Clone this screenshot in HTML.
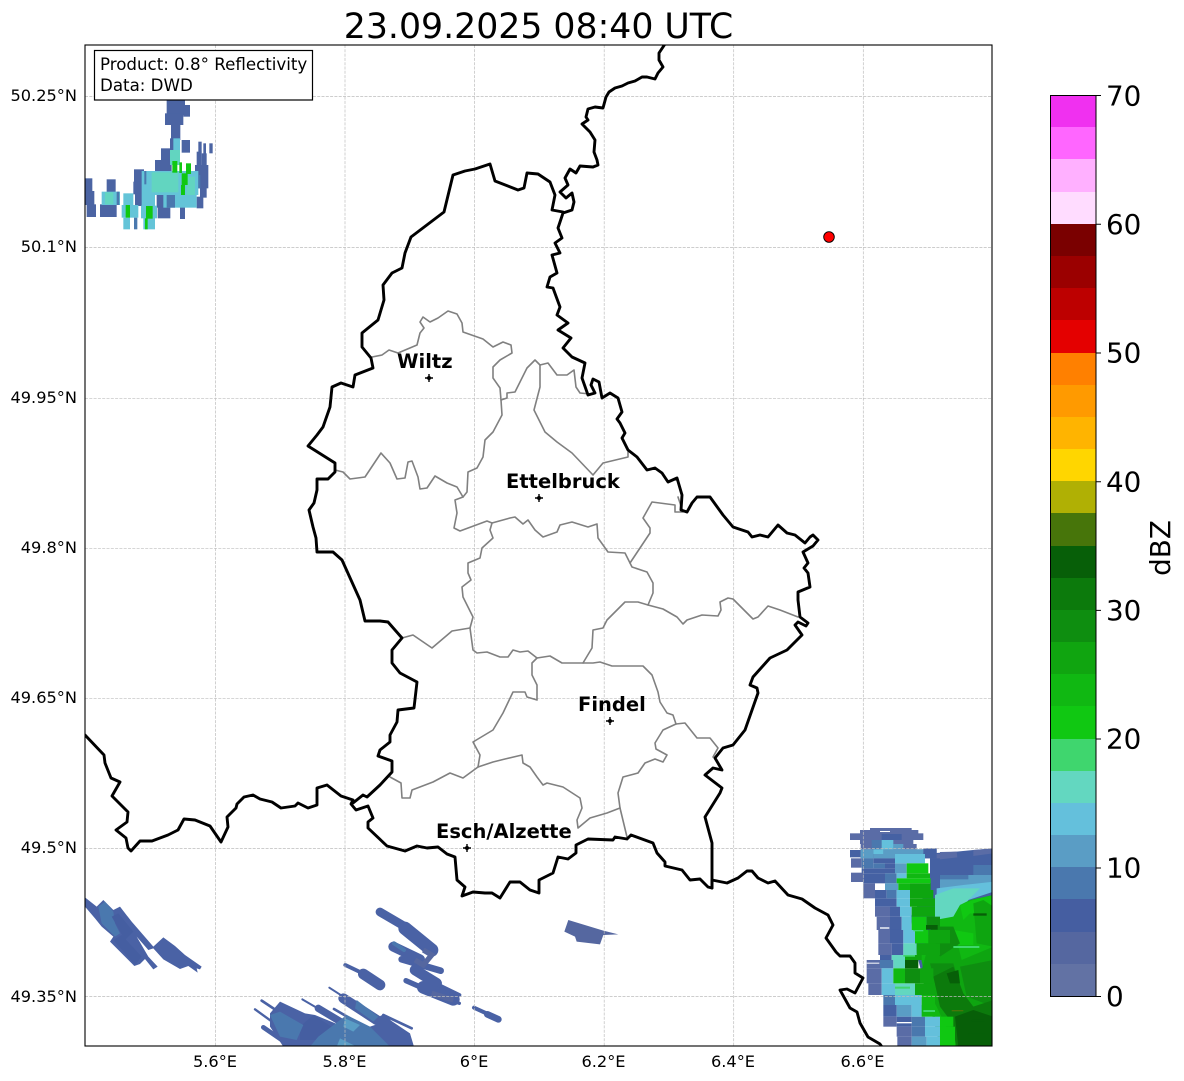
<!DOCTYPE html>
<html><head><meta charset="utf-8"><style>html,body{margin:0;padding:0;background:#fff}svg{display:block}text{font-family:"DejaVu Sans",sans-serif;fill:#000}</style></head><body>
<svg xmlns="http://www.w3.org/2000/svg" width="1184" height="1081" viewBox="0 0 1184 1081">
<defs><clipPath id="ax"><rect x="85" y="45" width="907" height="1001"/></clipPath></defs>
<rect width="1184" height="1081" fill="#fff"/>
<g clip-path="url(#ax)">
<!-- NW radar -->
<g transform="translate(85,45) scale(.33333)">
<g fill="#4b64a3"><rect x="245" y="160" width="55" height="50"/><rect x="240" y="205" width="55" height="35"/><rect x="295" y="180" width="20" height="35"/><rect x="258" y="240" width="28" height="45"/><rect x="255" y="280" width="30" height="35"/><rect x="290" y="285" width="25" height="38"/><rect x="228" y="310" width="30" height="40"/><rect x="210" y="345" width="50" height="38"/><rect x="147" y="373" width="30" height="40"/><rect x="145" y="410" width="50" height="38"/><rect x="150" y="445" width="60" height="38"/><rect x="335" y="320" width="15" height="42"/><rect x="350" y="325" width="15" height="38"/><rect x="330" y="360" width="40" height="70"/><rect x="345" y="420" width="20" height="38"/><rect x="335" y="455" width="20" height="35"/><rect x="215" y="450" width="30" height="38"/><rect x="0" y="400" width="22" height="40"/><rect x="0" y="438" width="28" height="42"/><rect x="5" y="478" width="28" height="38"/><rect x="65" y="403" width="27" height="40"/><rect x="45" y="478" width="50" height="38"/><rect x="218" y="485" width="38" height="35"/><rect x="285" y="487" width="15" height="35"/><rect x="340" y="290" width="10" height="32"/><rect x="355" y="295" width="8" height="32"/><rect x="373" y="295" width="10" height="30"/></g>
<g fill="#64c4d8"><rect x="265" y="280" width="20" height="35"/><rect x="110" y="480" width="50" height="38"/><rect x="235" y="450" width="100" height="38"/><rect x="115" y="518" width="20" height="35"/><rect x="175" y="518" width="35" height="35"/><rect x="147" y="518" width="10" height="35" fill="#4a78ae"/><rect x="168" y="482" width="48" height="38"/><rect x="170" y="378" width="170" height="72"/><rect x="50" y="440" width="55" height="40"/><rect x="115" y="445" width="30" height="35"/><rect x="170" y="450" width="40" height="35"/></g>
<g fill="#62d5c0"><rect x="200" y="382" width="80" height="60"/><rect x="255" y="315" width="30" height="45"/><rect x="305" y="395" width="25" height="55"/><rect x="60" y="442" width="25" height="36"/></g>
<g fill="#4a78ae"><rect x="178" y="378" width="6" height="40"/><rect x="245" y="450" width="25" height="38"/><rect x="340" y="390" width="6" height="40"/><rect x="95" y="440" width="8" height="40"/></g>
<g fill="#10c812"><rect x="262" y="348" width="15" height="35"/><rect x="283" y="352" width="8" height="32"/><rect x="303" y="355" width="15" height="32"/><rect x="290" y="385" width="18" height="35"/><rect x="288" y="420" width="12" height="30"/><rect x="122" y="480" width="13" height="38"/><rect x="183" y="483" width="20" height="38"/><rect x="180" y="520" width="8" height="33"/></g>
</g>
<!-- SE radar -->
<g transform="translate(840,820) scale(.33333)">
<path fill="#4561a3" d="M270 100 350 95 400 90 460 85V680H300L270 560 230 400 212 290 270 200Z"/>
<path fill="#5a6ca6" d="M300 96 350 95 352 112 300 118ZM400 90 460 85V100L400 108Z"/>
<rect x="300" y="165" width="100" height="20" fill="#4a78ae"/><rect x="400" y="135" width="60" height="55" fill="#4a78ae"/>
<rect x="300" y="178" width="90" height="34" fill="#5a9dc5"/><rect x="385" y="165" width="75" height="30" fill="#5a9dc5"/>
<path fill="#64c0dc" d="M290 205 370 195 460 185V215L385 240 290 250Z"/>
<path fill="#63d7c0" d="M285 225 340 205 420 205 385 240 350 290 300 325H285Z"/>
<path fill="#10b812" d="M285 300 340 290 360 255 390 240 460 225V680H300L240 400Z"/>
<path fill="#10c812" d="M360 255 400 240 460 225V285L390 280 370 300ZM300 610 340 620 345 680H300ZM340 330 400 340 400 375 345 375Z"/>
<path fill="#0ea510" d="M280 320 340 320 365 420 460 380V680H345L290 560 240 470ZM400 250 430 240 460 260V380L410 370Z"/>
<path fill="#0e8e10" d="M270 320 340 320 360 370 300 410ZM270 430 340 430 370 530 300 540ZM360 440 460 420 460 560 380 530Z"/>
<path fill="#0c7a0c" d="M280 470 340 440 370 520 400 560 460 540V680H350L330 600 300 560Z"/>
<path fill="#075f08" d="M345 590 400 570 460 590V680H355ZM320 460 355 450 360 490 330 490Z"/>
<g fill="#5a6ca6"><rect x="90" y="24" width="125" height="8"/><rect x="60" y="30" width="175" height="12"/><rect x="30" y="40" width="220" height="20"/><rect x="60" y="60" width="160" height="12"/><rect x="62" y="72" width="168" height="16"/><rect x="62" y="88" width="228" height="14"/><rect x="62" y="102" width="238" height="13"/><rect x="33" y="115" width="32" height="28"/><rect x="33" y="158" width="37" height="28"/><rect x="70" y="190" width="35" height="45"/><rect x="105" y="260" width="45" height="30"/><rect x="110" y="290" width="40" height="40"/><rect x="115" y="330" width="35" height="40"/><rect x="115" y="370" width="40" height="35"/><rect x="80" y="420" width="40" height="25"/><rect x="80" y="445" width="45" height="45"/><rect x="85" y="490" width="40" height="35"/><rect x="130" y="590" width="40" height="30"/><rect x="170" y="620" width="45" height="30"/><rect x="172" y="650" width="43" height="30"/></g>
<g fill="#4561a3"><rect x="30" y="90" width="32" height="22"/><rect x="125" y="42" width="60" height="18"/><rect x="250" y="85" width="40" height="30"/><rect x="100" y="115" width="65" height="15"/><rect x="135" y="130" width="30" height="15"/><rect x="65" y="145" width="100" height="15"/><rect x="70" y="160" width="65" height="30"/><rect x="105" y="210" width="35" height="25"/><rect x="105" y="235" width="65" height="25"/><rect x="150" y="260" width="30" height="30"/><rect x="150" y="290" width="35" height="40"/><rect x="150" y="330" width="40" height="40"/><rect x="155" y="370" width="35" height="35"/><rect x="120" y="405" width="35" height="15"/><rect x="130" y="555" width="40" height="35"/><rect x="170" y="590" width="45" height="30"/></g>
<g fill="#4a78ae"><rect x="95" y="60" width="30" height="28"/><rect x="65" y="115" width="35" height="30"/><rect x="100" y="130" width="35" height="15"/><rect x="135" y="160" width="35" height="30"/><rect x="140" y="210" width="30" height="25"/><rect x="120" y="420" width="40" height="25"/><rect x="130" y="525" width="35" height="30"/><rect x="215" y="590" width="40" height="30"/><rect x="215" y="620" width="40" height="30"/><rect x="170" y="555" width="45" height="35" fill="#5a9dc5"/></g>
<g fill="#5a9dc5"><rect x="62" y="88" width="38" height="27"/><rect x="100" y="102" width="65" height="13"/><rect x="130" y="88" width="120" height="14"/><rect x="160" y="72" width="30" height="16"/><rect x="135" y="190" width="40" height="20"/><rect x="165" y="130" width="35" height="30"/><rect x="215" y="650" width="45" height="30"/></g>
<g fill="#64c0dc"><rect x="125" y="60" width="35" height="28"/><rect x="100" y="88" width="30" height="14"/><rect x="165" y="102" width="90" height="28"/><rect x="170" y="160" width="30" height="15"/><rect x="170" y="210" width="40" height="25"/><rect x="170" y="235" width="40" height="25"/><rect x="180" y="260" width="35" height="30"/><rect x="185" y="290" width="30" height="40"/><rect x="190" y="330" width="35" height="40"/><rect x="125" y="445" width="35" height="45"/><rect x="125" y="490" width="40" height="35"/><rect x="165" y="525" width="80" height="30"/><rect x="215" y="555" width="35" height="35"/><rect x="255" y="590" width="45" height="30"/><rect x="255" y="620" width="45" height="30"/><rect x="260" y="650" width="40" height="30"/></g>
<g fill="#63d7c0"><rect x="190" y="370" width="40" height="35"/><rect x="155" y="405" width="40" height="15"/><rect x="160" y="420" width="35" height="25"/><rect x="165" y="490" width="60" height="35"/></g>
<g fill="#10c812"><rect x="200" y="130" width="65" height="30"/><rect x="170" y="175" width="102" height="15"/><rect x="215" y="290" width="45" height="40"/><rect x="225" y="330" width="40" height="40"/><rect x="300" y="590" width="40" height="30"/><rect x="300" y="620" width="45" height="60"/></g>
<g fill="#10b812"><rect x="200" y="160" width="70" height="15"/><rect x="175" y="190" width="35" height="20"/><rect x="160" y="445" width="35" height="45"/><rect x="245" y="525" width="40" height="65"/></g>
<g fill="#0ea510"><rect x="210" y="190" width="62" height="20"/><rect x="210" y="210" width="70" height="25"/><rect x="210" y="235" width="75" height="25"/><rect x="215" y="260" width="70" height="30"/><rect x="265" y="330" width="65" height="40"/><rect x="230" y="370" width="70" height="35"/><rect x="195" y="405" width="50" height="15"/><rect x="240" y="445" width="40" height="45"/><rect x="225" y="490" width="60" height="35"/></g>
<g fill="#0e8e10"><rect x="260" y="290" width="40" height="30"/><rect x="195" y="445" width="45" height="45"/></g>
<g fill="#075f08"><rect x="195" y="420" width="40" height="25" /><rect x="258" y="315" width="35" height="14"/><rect x="395" y="600" width="40" height="5"/><rect x="385" y="640" width="50" height="5"/><rect x="400" y="280" width="40" height="7"/></g>
<g fill="#3fd66e"><rect x="340" y="378" width="78" height="6"/><rect x="220" y="330" width="30" height="4"/><rect x="250" y="570" width="35" height="6"/><rect x="165" y="500" width="45" height="6"/><rect x="190" y="405" width="35" height="5"/></g>
<rect x="335" y="570" width="35" height="4" fill="#47750a"/>
<g fill="#fff"><rect x="120" y="322" width="28" height="4"/><rect x="170" y="606" width="45" height="4"/><rect x="80" y="428" width="38" height="3"/><rect x="120" y="33" width="30" height="3"/></g>
</g>
<!-- SW radar -->
<g transform="translate(85,890) scale(.33333)">
<path fill="#4a62a5" d="M0 22 35 50 55 30 85 60 105 50 140 95 205 170 235 142 270 168 300 195 350 230 345 238 335 235 338 248 310 228 285 237 235 208 205 175 190 180 155 140 190 200 218 230 205 238 180 207 165 222 148 228 75 155 85 140 50 110 30 85 0 50Z"/>
<path fill="#4a78ae" d="M40 50 60 35 85 65 90 100 105 130 90 140 50 100Z"/>
<path fill="#455ea1" d="M80 80 100 70 145 125 120 150ZM85 150 110 135 170 200 150 225Z"/>
</g>
<!-- S radar -->
<g transform="translate(250,900) scale(.33333)" fill="none" stroke="#4a62a5">
<g stroke-linecap="round">
<path stroke-width="26" d="M390 36 465 80"/><path stroke-width="40" d="M465 85 545 150"/><path stroke-width="30" d="M430 140 510 178"/><path stroke-width="20" d="M455 178 572 212"/><path stroke-width="32" d="M495 210 560 250"/><path stroke-width="16" d="M468 242 520 265"/><path stroke-width="38" d="M520 262 610 298"/><path stroke-width="12" d="M560 252 628 285"/><path stroke-width="10" d="M600 300 628 310"/>
<path stroke-width="12" d="M286 195 330 216"/><path stroke-width="32" d="M340 222 390 255"/>
<path stroke-width="8" d="M35 302 100 345"/><path stroke-width="7" d="M15 328 80 375"/><path stroke-width="14" d="M40 382 110 430"/><path stroke-width="6" d="M157 298 220 335"/><path stroke-width="22" d="M205 325 280 370"/><path stroke-width="6" d="M238 263 280 290"/><path stroke-width="30" d="M280 295 380 360"/><path stroke-width="8" d="M252 327 300 355"/><path stroke-width="8" d="M400 345 485 385"/><path stroke-width="30" d="M400 360 460 420"/>
<path stroke-width="12" d="M672 323 720 345"/><path stroke-width="20" d="M712 343 745 358"/>
</g>
<path stroke="none" fill="#4a62a5" d="M90 305 165 340 195 345 280 380 330 390 420 360 480 400 492 440H100L60 380 60 340Z"/>
<path stroke="none" fill="#5567a0" d="M955 60 1060 92 1105 103 1060 105 1050 133 980 125 975 110 943 95Z"/>
<path stroke="none" fill="#455ea1" d="M150 380 190 345 260 390 225 420 150 420Z"/>
<path stroke="none" fill="#4a78ae" d="M60 345 90 335 160 375 140 420 90 410ZM180 440 205 410 290 345 360 380 420 440ZM320 300 385 350 370 365 315 325Z"/>
<path stroke="none" fill="#5a9dc5" d="M260 440 270 415 320 440ZM285 355 330 375 310 395 280 380Z"/>
<path stroke-width="12" stroke="#4a78ae" stroke-linecap="round" d="M432 130 462 150"/>
<path stroke-width="16" stroke="#5567a0" d="M520 150 545 165 520 195 495 180M545 280 610 300"/>
</g>
<!-- grid -->
<g stroke="#bdbdbd" stroke-width=".7" stroke-dasharray="3 1.3" fill="none">
<path d="M215.4 45V1046M345 45V1046M474.5 45V1046M604.2 45V1046M733.7 45V1046M863.3 45V1046"/>
<path d="M85 96.5H992M85 247.5H992M85 398.3H992M85 548.3H992M85 698.3H992M85 848.5H992M85 996.5H992"/>
</g>
<!-- gray boundaries -->
<g fill="none" stroke="#808080" stroke-width="1.6" stroke-linejoin="round" stroke-linecap="round">
<polyline points="372,357 382,355 389,350 398,353 417,345 420,333 424,328 420,322 423,317 430,322 438,318 448,311 457,314 462,323 463,332 483,339 493,347 503,342 511,345 512,353 500,360 493,367 493,378 500,388 501,400 502,415 493,432 485,440 483,457 477,468 468,472 467,492 463,497"/>
<polyline points="501,400 507,398 507,393 515,392 527,368 535,360 540,365"/>
<polyline points="540,365 540,387 534,410 545,432 557,442 572,453 593,475 603,463 628,457 628,452"/>
<polyline points="540,365 548,363 557,375 567,375 574,370 576,387 580,393 590,394"/>
<polyline points="335,470 343,472 350,479 365,477 381,453 390,463 397,479 405,478 408,462 412,461 418,477 420,489 427,488 435,476 447,483 457,487 463,497 455,500 457,513 454,528 460,531 487,521 492,523 510,518 515,517 523,524 528,520 535,530 543,537 557,532 560,525 572,522 588,527 597,524 598,538 608,552 625,553 630,563 650,533 650,528 643,518 652,502 675,505 675,512 683,512 678,497"/>
<polyline points="630,563 632,567 647,572 653,583 653,593 648,605"/>
<polyline points="583,663 592,648 593,630 603,628 607,620 625,602 638,602 648,605 663,609 677,617 683,624 687,620 702,615 718,616 721,610 720,602 728,598 733,599 753,619 758,617 768,606 780,610 798,617"/>
<polyline points="492,523 490,530 493,538 482,548 480,558 468,563 468,573 471,580 462,587 463,597 473,617 470,628 473,650 477,653 487,652 500,657 508,657 513,650 520,652 528,651 537,658 550,656 562,663 583,663 593,663 600,662 612,666 643,666 652,675 658,692 660,702 667,713 673,715 676,724"/>
<polyline points="470,628 452,631 432,648 413,635 402,638"/>
<polyline points="676,724 685,723 697,738 710,738 718,748 713,757"/>
<polyline points="676,724 663,730 655,743 656,749 667,755 663,762 655,759 645,763 638,773 623,777 618,793 620,808 627,837"/>
<polyline points="620,808 607,813 590,818 578,828 577,820 582,808 580,798 563,787 547,783 543,785 537,777 530,767 523,763 522,755 505,759 493,762 478,767"/>
<polyline points="478,767 480,755 473,742 493,730 503,713 513,692 525,692 527,697 537,700 537,685 532,675 532,663 537,658"/>
<polyline points="478,767 463,778 450,773 433,782 412,790 410,798 402,798 401,783 390,777"/>
</g>
<!-- black boundaries -->
<g fill="none" stroke="#000" stroke-width="2.9" stroke-linejoin="round" stroke-linecap="round">
<polyline points="85,735 104,755 105,763 111,778 120,782 112,796 128,812 127,822 116,830 126,838 128,848 131,851 140,841 152,841 168,835 178,830 184,819 195,820 210,826 221,842 228,827 227,817 236,808 237,804 244,797 253,795 260,799 272,802 281,808 295,806 298,803 308,808 317,805 317,788 327,785 341,796 353,800 351,804 356,810 368,806 373,818 368,822 368,828 387,846 405,851 417,846 427,848 438,847 447,854 455,857 457,880 465,887 462,896 473,892 485,893 492,893 500,898 510,882 520,882 530,890 539,893 539,880 553,873 558,857 568,859 576,853 576,845 588,839 613,840 615,837 627,839 631,835 653,843 657,853 665,862 665,866 682,870 690,880 700,879 708,887 712,888 712,880 727,883 738,878 747,871 752,871 758,878 768,883 775,881 788,895 802,899 815,908 828,915 833,925 826,938 836,952 840,956 850,956 855,963 855,973 863,978 855,993 847,989 840,990 850,1008 857,1012 860,1023 868,1037 880,1044 884,1050"/>
<polyline points="712,888 712,843 705,817 720,793 722,788 705,775 713,768 722,770 715,758 723,748 733,745 745,730 758,693 757,688 750,685 753,677 770,658 787,650 802,635 795,625 798,622 806,626 808,623 800,617 798,600 798,592 810,587 808,573 804,568 808,563 803,552 813,546 818,540 813,535 810,537 805,543 795,535 787,533 778,525 768,537 760,535 752,537 748,532 733,527 723,515 710,497 697,497 692,503 687,512 681,510 682,495 677,478 668,482 662,473 655,468 647,470 637,457 628,450 622,438 625,433 620,423 617,419 622,412 618,398 610,393 602,398 599,382 593,379 591,385 595,393 588,395 582,378 585,363 572,357 563,348 571,338 558,330 568,323 557,315 560,307 553,288 547,287 550,277 557,273 552,255 560,253 555,243 562,238 558,228 563,213 572,210 574,202 572,193 566,198 560,192 568,185 565,178 570,169 576,173 580,166 593,167 598,165 597,160 594,152 595,140 590,132 582,124 588,120 586,117 588,109 595,107 603,108 606,97 609,92 615,88 622,86 628,83 635,81 642,77 647,77 655,79 658,73 663,67 659,60 659,53 665,44"/>
<polyline points="563,212 552,210 555,195 550,182 538,174 527,173 524,188 518,190 495,181 490,164 475,169 465,171 453,175 444,212 411,237 405,253 402,268 392,273 383,285 384,300 378,320 362,333 362,347 371,358 373,368 355,375 353,387 341,383 332,387 330,407 323,427 317,435 308,446 335,463 335,472 328,479 317,479 317,490 314,503 309,510 313,527 316,538 317,552 333,552 342,560 360,600 365,621 380,621 388,622 402,638 392,650 392,663 400,673 417,682 414,708 398,710 397,722 390,735 390,742 380,750 378,756 392,761 392,772 380,785 367,797 363,795 353,803"/>
</g>
<!-- cities -->
<g stroke="#000" stroke-width="1.4" fill="#000">
<path d="M425 378H433M429 374V382"/><circle cx="429" cy="378" r="2" stroke="none"/>
<path d="M535 498H543M539 494V502"/><circle cx="539" cy="498" r="2" stroke="none"/>
<path d="M606 721H614M610 717V725"/><circle cx="610" cy="721" r="2" stroke="none"/>
<path d="M463 848H471M467 844V852"/><circle cx="467" cy="848" r="2" stroke="none"/>
</g>
<g font-size="19.5" font-weight="700">
<text x="397" y="368">Wiltz</text>
<text x="506" y="488">Ettelbruck</text>
<text x="578" y="711">Findel</text>
<text x="436" y="838">Esch/Alzette</text>
</g>
<circle cx="829" cy="237" r="5.3" fill="#f00" stroke="#000" stroke-width=".9"/>
</g>
<!-- info box -->
<rect x="94.5" y="50.5" width="218" height="49.5" fill="#fff" stroke="#000" stroke-width="1.2"/>
<text x="100" y="70" font-size="16.67">Product: 0.8° Reflectivity</text>
<text x="100" y="91" font-size="16.67">Data: DWD</text>
<!-- frame -->
<rect x="85" y="45" width="907" height="1001" fill="none" stroke="#000" stroke-width="1.1"/>
<text x="538.5" y="38" font-size="34.7" text-anchor="middle">23.09.2025 08:40 UTC</text>
<g font-size="16.2" text-anchor="end">
<text x="77" y="101">50.25°N</text><text x="77" y="252">50.1°N</text><text x="77" y="403">49.95°N</text><text x="77" y="553">49.8°N</text><text x="77" y="703">49.65°N</text><text x="77" y="853">49.5°N</text><text x="77" y="1002">49.35°N</text>
</g>
<g font-size="16.2" text-anchor="middle">
<text x="215" y="1067">5.6°E</text><text x="344.5" y="1067">5.8°E</text><text x="474" y="1067">6°E</text><text x="603.5" y="1067">6.2°E</text><text x="733" y="1067">6.4°E</text><text x="862.5" y="1067">6.6°E</text>
</g>
<!-- colorbar -->
<g shape-rendering="crispEdges">
<rect x="1050" y="95.5" width="46" height="33" fill="#f030f0"/><rect x="1050" y="127" width="46" height="33" fill="#ff66ff"/><rect x="1050" y="159" width="46" height="33" fill="#ffb0ff"/><rect x="1050" y="192" width="46" height="33" fill="#ffdcff"/><rect x="1050" y="224" width="46" height="33" fill="#7a0000"/><rect x="1050" y="256" width="46" height="33" fill="#9b0000"/><rect x="1050" y="288" width="46" height="33" fill="#bd0000"/><rect x="1050" y="320" width="46" height="33" fill="#e40000"/><rect x="1050" y="353" width="46" height="33" fill="#ff8000"/><rect x="1050" y="385" width="46" height="33" fill="#ff9a00"/><rect x="1050" y="417" width="46" height="33" fill="#ffb400"/><rect x="1050" y="449" width="46" height="33" fill="#ffd600"/><rect x="1050" y="481" width="46" height="33" fill="#b0b004"/><rect x="1050" y="513" width="46" height="33" fill="#47750a"/><rect x="1050" y="546" width="46" height="33" fill="#075f08"/><rect x="1050" y="578" width="46" height="33" fill="#0c7a0c"/><rect x="1050" y="610" width="46" height="33" fill="#0e8e10"/><rect x="1050" y="642" width="46" height="33" fill="#10a510"/><rect x="1050" y="674" width="46" height="33" fill="#10b812"/><rect x="1050" y="706" width="46" height="33" fill="#10c812"/><rect x="1050" y="739" width="46" height="33" fill="#3fd66e"/><rect x="1050" y="771" width="46" height="33" fill="#63d7c0"/><rect x="1050" y="803" width="46" height="33" fill="#64c0dc"/><rect x="1050" y="835" width="46" height="33" fill="#5a9dc5"/><rect x="1050" y="867" width="46" height="33" fill="#4a78ae"/><rect x="1050" y="899" width="46" height="33" fill="#455ea1"/><rect x="1050" y="932" width="46" height="32" fill="#5567a0"/><rect x="1050" y="964" width="46" height="32.5" fill="#6272a4"/>
</g>
<rect x="1050.5" y="95.5" width="45.5" height="901" fill="none" stroke="#000" stroke-width="1"/>
<path d="M1096 95.5H1101M1096 224.3H1101M1096 353H1101M1096 481.7H1101M1096 610.4H1101M1096 739H1101M1096 868H1101M1096 996.5H1101" stroke="#000" stroke-width="1" fill="none"/>
<g font-size="27.78">
<text x="1106" y="105.3">70</text><text x="1106" y="234">60</text><text x="1106" y="362.7">50</text><text x="1106" y="491.3">40</text><text x="1106" y="620">30</text><text x="1106" y="748.7">20</text><text x="1106" y="877.7">10</text><text x="1106" y="1006">0</text>
</g>
<text transform="translate(1170,548) rotate(-90)" font-size="27.78" text-anchor="middle">dBZ</text>
</svg>
</body></html>
